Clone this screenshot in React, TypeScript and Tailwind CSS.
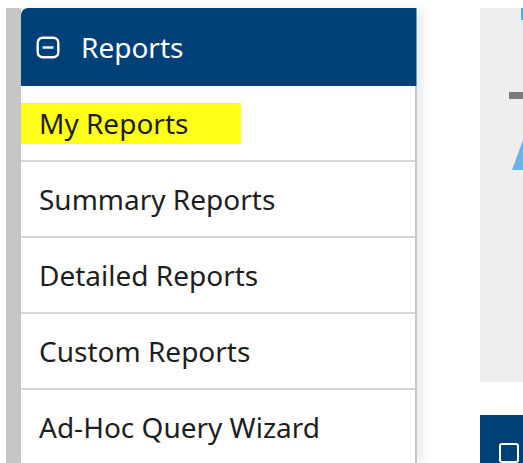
const items = ["Summary Reports", "Detailed Reports", "Custom Reports", "Ad-Hoc Query Wizard"];

function CollapseIcon() {
  return (
    <svg width="24" height="23" viewBox="0 0 24 23" fill="none" stroke="white" strokeWidth="2.4">
      <rect x="1.7" y="1.7" width="20.6" height="19.6" rx="5" />
      <line x1="6.5" y1="11.5" x2="17.5" y2="11.5" />
    </svg>
  );
}

export default function App() {
  return (
    <div className="h-[463px] w-[523px] overflow-hidden bg-white pt-[8px] font-['Noto_Sans',sans-serif]">
      <div className="flex h-full">
        <div className="ml-[6px] w-[15px] shrink-0 bg-[#c6c6c6]" />
        <div className="w-[396px] shrink-0 shadow-[6px_0_10px_rgba(0,0,0,0.08)]">
          <div className="flex h-[78px] items-center gap-[21px] rounded-tl-[7px] border-r border-[#6a9ccf] bg-[#004079] pl-[15px] text-[28px] text-white">
            <CollapseIcon />
            <span>Reports</span>
          </div>
          <div className="border-r-2 border-[#c8c8c8] bg-white">
            <div className="flex h-[76px] items-center border-b-2 border-[#d6d6d6]">
              <span className="flex h-[41px] w-[220px] items-center bg-[#ffff1a] pl-[18px] text-[28px] text-[#1e1e1e]">
                My Reports
              </span>
            </div>
            {items.map((label) => (
              <div key={label} className="flex h-[76px] items-center border-b-2 border-[#d6d6d6] pl-[18px] text-[28px] text-[#1e1e1e]">
                {label}
              </div>
            ))}
          </div>
        </div>
        <div className="ml-[63px] flex flex-1 flex-col">
          <div className="relative h-[380px] bg-[#eeeeee]">
            <div className="absolute right-0 top-0 h-[12px] w-[2px] bg-[#5aa7dd]" />
            <div className="absolute right-0 top-[84px] h-[7px] w-[14px] bg-[#7a7a7a]" />
            <svg className="absolute right-0 top-[132px]" width="11" height="30" viewBox="0 0 11 30">
              <polygon points="11,0 11,30 0,30" fill="#6cb2e3" />
            </svg>
          </div>
          <div className="mt-[33px] flex-1 bg-[#004079] pl-[19px] pt-[28px]">
            <div className="h-[20px] w-[20px] rounded-[3px] border-2 border-white" />
          </div>
        </div>
      </div>
    </div>
  );
}
